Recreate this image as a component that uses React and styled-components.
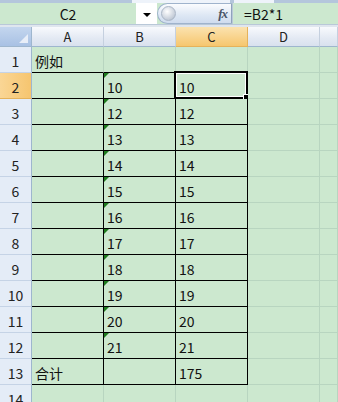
import React from 'react';
import styled, { createGlobalStyle } from 'styled-components';

const GlobalStyle = createGlobalStyle`
  html, body {
    margin: 0;
    padding: 0;
    background: #cce8cf;
    overflow: hidden;
  }
  body {
    font-family: "Noto Sans CJK SC", "DejaVu Sans", sans-serif;
  }
`;

const Page = styled.div`
  width: 338px;
  height: 402px;
  overflow: hidden;
  display: flex;
  flex-direction: column;
  & > * {
    flex-shrink: 0;
  }
`;

const TopStrip = styled.div`
  height: 3px;
  display: flex;
  background: #b4c6dc;
`;

const StripBlock = styled.div`
  width: ${(p) => p.w}px;
  margin-left: ${(p) => p.ml}px;
  background: #eef3fa;
`;

const FormulaBar = styled.div`
  height: 21px;
  display: flex;
  align-items: stretch;
  background: #cce8cf;
  border-bottom: 1px solid #b9c8d8;
`;

const NameBox = styled.div`
  width: 136px;
  display: flex;
  align-items: center;
  justify-content: center;
  font-size: 14px;
  color: #111;
`;

const DropBox = styled.div`
  width: 21px;
  background: #fff;
  display: flex;
  align-items: center;
  justify-content: center;
`;

const Arrow = styled.div`
  width: 0;
  height: 0;
  border-left: 4px solid transparent;
  border-right: 4px solid transparent;
  border-top: 4px solid #000;
  margin-top: 2px;
`;

const FxPill = styled.div`
  width: 75px;
  background: linear-gradient(#fbfcfe, #dde7f4 60%, #cfdcee);
  border: 1px solid #9fb3cc;
  border-right: 1px solid #8fa3bc;
  border-radius: 11px 0 0 11px;
  display: flex;
  align-items: center;
  justify-content: space-between;
  padding: 0 4px 0 3px;
  box-sizing: border-box;
`;

const Knob = styled.div`
  width: 13px;
  height: 13px;
  border-radius: 50%;
  background: radial-gradient(circle at 40% 35%, #ffffff, #c4ccd8 70%, #98a4b4);
  border: 1px solid #aab6c6;
`;

const Fx = styled.span`
  font-family: "Liberation Serif", serif;
  font-style: italic;
  font-weight: bold;
  font-size: 13px;
  color: #4a5568;
  letter-spacing: -1px;
`;

const FormulaText = styled.div`
  flex: 1;
  display: flex;
  align-items: center;
  padding-left: 11px;
  font-size: 14px;
  color: #111;
  border-left: 1px solid #b9c8d8;
`;

const Spacer = styled.div`
  height: 2px;
  background: #dfe6ee;
`;

const Grid = styled.div`
  display: grid;
  grid-template-columns: 32px 72px 72px 72px 72px 1fr;
  grid-template-rows: 20px repeat(14, 26px);
`;

const Corner = styled.div`
  background: linear-gradient(#c4d6ee, #a8c1e4);
  border-right: 1px solid #9eb6ce;
  border-bottom: 1px solid #9eb6ce;
  position: relative;
  &::after {
    content: '';
    position: absolute;
    right: 3px;
    bottom: 3px;
    border-left: 9px solid transparent;
    border-bottom: 9px solid #e8eef8;
  }
`;

const ColHead = styled.div`
  background: ${(p) =>
    p.active
      ? 'linear-gradient(#fbe3b0, #f6c66e)'
      : 'linear-gradient(#f8fafd, #e3e9f3 60%, #d9e1ee)'};
  border-right: 1px solid ${(p) => (p.active ? '#e5b25a' : '#c5d0df')};
  border-bottom: 1px solid ${(p) => (p.active ? '#e5b25a' : '#9eb6ce')};
  display: flex;
  align-items: center;
  justify-content: center;
  font-size: 13px;
  color: #222;
`;

const RowHead = styled.div`
  background: ${(p) => (p.active ? 'linear-gradient(90deg, #fad695, #f6c56f)' : '#e4ecf7')};
  border-right: 1px solid #9eb6ce;
  border-bottom: 1px solid ${(p) => (p.active ? '#e5b25a' : '#c5d3e6')};
  display: flex;
  align-items: flex-end;
  justify-content: center;
  padding-bottom: 1px;
  box-sizing: border-box;
  font-size: 14px;
  color: #222;
`;

const Cell = styled.div`
  position: relative;
  background: #cce8cf;
  border-right: 1px solid ${(p) => (p.rb ? '#000' : '#b8d5c0')};
  border-bottom: 1px solid ${(p) => (p.bb ? '#000' : '#b8d5c0')};
  display: flex;
  align-items: flex-end;
  padding: 0 0 1px 3px;
  box-sizing: border-box;
  font-size: 14px;
  color: #111;
  white-space: nowrap;
`;

const Flag = styled.span`
  position: absolute;
  left: 0;
  top: 0;
  border-top: 5px solid #1e7b1e;
  border-right: 5px solid transparent;
`;

const Selection = styled.span`
  position: absolute;
  left: -2px;
  top: -2px;
  right: -1px;
  bottom: -1px;
  border: 2px solid #000;
  box-shadow: inset 0 0 0 1px #fff;
  pointer-events: none;
  &::after {
    content: '';
    position: absolute;
    right: -4px;
    bottom: -4px;
    width: 5px;
    height: 5px;
    background: #000;
    border: 1px solid #fff;
  }
`;

const cols = ['A', 'B', 'C', 'D', 'E'];
const values = [10, 12, 13, 14, 15, 16, 17, 18, 19, 20, 21];

const rows = [];
for (let r = 1; r <= 14; r++) {
  const cells = ['', '', '', '', ''];
  if (r === 1) cells[0] = '例如';
  if (r >= 2 && r <= 12) {
    cells[1] = String(values[r - 2]);
    cells[2] = String(values[r - 2]);
  }
  if (r === 13) {
    cells[0] = '合计';
    cells[2] = '175';
  }
  rows.push(cells);
}

export default function App() {
  return (
    <Page>
      <GlobalStyle />
      <TopStrip>
        <StripBlock ml={132} w={98} />
        <StripBlock ml={4} w={40} />
      </TopStrip>
      <FormulaBar>
        <NameBox>C2</NameBox>
        <DropBox>
          <Arrow />
        </DropBox>
        <FxPill>
          <Knob />
          <Fx>fx</Fx>
        </FxPill>
        <FormulaText>=B2*1</FormulaText>
      </FormulaBar>
      <Spacer />
      <Grid>
        <Corner />
        {cols.map((c) => (
          <ColHead key={c} active={c === 'C'}>
            {c === 'E' ? '' : c}
          </ColHead>
        ))}
        {rows.map((cells, i) => {
          const r = i + 1;
          const inBox = r >= 2 && r <= 13;
          return (
            <React.Fragment key={r}>
              <RowHead active={r === 2}>{r}</RowHead>
              {cells.map((v, j) => (
                <Cell key={j} bb={r <= 13 && j <= 2} rb={inBox && j <= 2}>
                  {j === 1 && r >= 2 && r <= 12 && <Flag />}
                  {r === 2 && j === 2 && <Selection />}
                  {v}
                </Cell>
              ))}
            </React.Fragment>
          );
        })}
      </Grid>
    </Page>
  );
}
